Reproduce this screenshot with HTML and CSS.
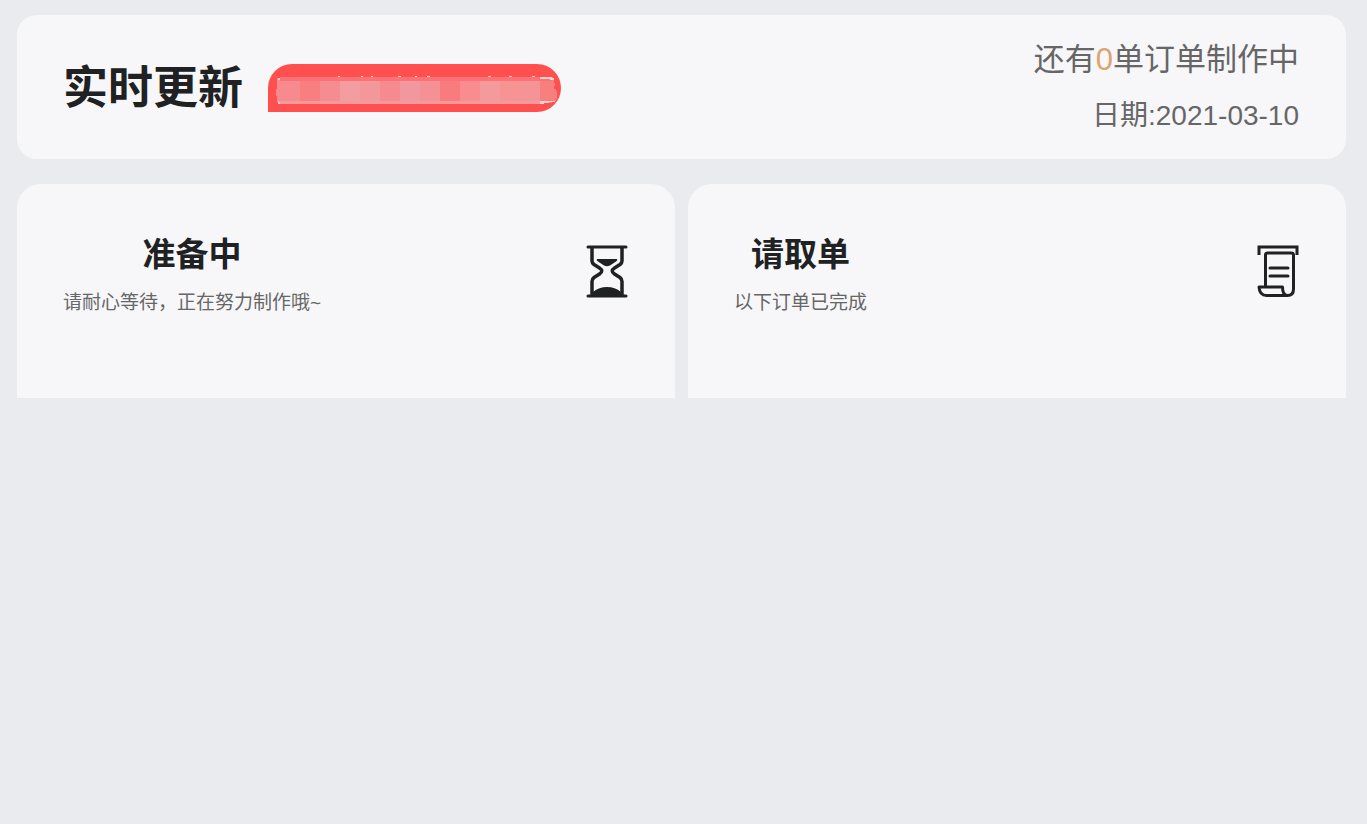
FILE: index.html
```
<!DOCTYPE html>
<html lang="zh-CN">
<head>
    <meta charset="UTF-8">
    <meta name="viewport" content="width=device-width, initial-scale=1.0">
    <title>实时更新</title>
    <link rel="stylesheet" href="styles.css">
</head>
<body>
    <header class="top-bar">
        <h1>实时更新</h1>
        <div class="notice">
            <svg width="293" height="48" viewBox="0 0 293 48" aria-hidden="true" shape-rendering="crispEdges">
                <path fill="#f78a8e" d="M9 14h3v26h-2v-2h-1v-6h-1v-7h1z"/>
                <!-- bloques -->
                <rect x="12" y="13" width="20" height="27" fill="#f78a8e"/>
                <rect x="32" y="13" width="20" height="27" fill="#f87e80"/>
                <rect x="52" y="13" width="20" height="27" fill="#f58c92"/>
                <rect x="72" y="13" width="20" height="27" fill="#f29ea0"/>
                <rect x="92" y="13" width="20" height="27" fill="#f4979b"/>
                <rect x="112" y="13" width="20" height="27" fill="#f58a8f"/>
                <rect x="132" y="13" width="20" height="27" fill="#f2979e"/>
                <rect x="152" y="13" width="20" height="27" fill="#f49195"/>
                <rect x="172" y="13" width="20" height="27" fill="#f87c7e"/>
                <rect x="192" y="13" width="20" height="27" fill="#f88c8f"/>
                <rect x="212" y="13" width="20" height="27" fill="#f49a9c"/>
                <rect x="232" y="13" width="20" height="27" fill="#f69393"/>
                <rect x="252" y="13" width="20" height="27" fill="#f49496"/>
                <path fill="#f77f80" d="M272 13h13v2h1v4h1v3h-1v3h2v2h1v8h-1v2h-4v2h-12z"/>
                <rect x="12" y="13" width="272" height="4" fill="#fb7276"/>
                <rect x="10" y="37" width="262" height="3" fill="#f6999c"/>
                <path fill="#fbd0d2" d="M272 37h15v1h-6v1h-5v1h-4zM272 13h12v1h2v2h-4v-1h-10zM10 14h2v2h-2zM10 37h1v1h1v2h-2zM70 12h2v1h-2zM93 12h2v1h-2zM103 12h2v1h-2zM130 12h3v1h-3zM147 12h2v1h-2zM159 12h3v1h-3zM220 12h3v1h-3zM241 12h3v1h-3zM264 12h3v1h-3z"/>
            </svg>
        </div>
        <div class="summary">
            <p class="remain">还有<span>0</span>单订单制作中</p>
            <p class="date">日期:2021-03-10</p>
        </div>
    </header>

    <main class="boards">
        <section class="board">
            <div class="board-title">
                <h2>准备中</h2>
                <p>请耐心等待，正在努力制作哦~</p>
            </div>
            <svg class="icon" viewBox="0 0 42 54" aria-hidden="true">
                <g fill="none" stroke="#202122" stroke-width="3.5" stroke-linecap="round" stroke-linejoin="round">
                    <path stroke-width="3" d="M2 2h38M2 51h38"/>
                    <path d="M6 3v13q0 2 2 3.500l5.500 3.500q4.500 3 0 6L8 32.500q-2 1.500-2 4V50"/>
                    <path d="M36 3v13q0 2-2 3.500L28.500 23q-4.500 3 0 6l5.500 3.500q2 1.500 2 4V50"/>
                </g>
                <path fill="#202122" d="M11 14h20q1 1-1 2.500l-6 4q-3 1.500-6 0l-6-4q-2-1.500-1-2.500zM7 50v-3q6-5 14-5t14 5v3z"/>
            </svg>
        </section>
        <section class="board">
            <div class="board-title">
                <h2>请取单</h2>
                <p>以下订单已完成</p>
            </div>
            <svg class="icon" viewBox="0 0 42 54" aria-hidden="true">
                <g fill="none" stroke="#202122" stroke-width="3" stroke-linecap="round" stroke-linejoin="round">
                    <path stroke-linecap="butt" stroke-linejoin="miter" d="M2 10V2h38v8"/>
                    <path d="M8 42V10q0-2 2-2h24q2 0 2 2v34q0 6.500-6 6.500H9q-7 0-7.500-8.500H25q0 8.500 5 8.500" transform="translate(.5 0)"/>
                    <path d="M13 23h18M13 31h18"/>
                </g>
            </svg>
        </section>
    </main>
</body>
</html>
```
FILE: styles.css
```
* {
    box-sizing: border-box;
}

body {
    margin: 0;
    padding: 15px 21px 0 17px;
    min-height: 100vh;
    font-family: "Liberation Sans", "Noto Sans CJK SC", sans-serif;
    background: #eaebef;
    color: #202122;
}

h1,
h2,
p {
    margin: 0;
}

.top-bar {
    display: flex;
    align-items: center;
    padding: 17px 47px 15px 46px;
    margin-bottom: 25px;
    background: #f7f7f9;
    border-radius: 20px;
}

.top-bar h1 {
    padding-top: 2px;
    font-size: 45px;
    line-height: 56px;
}

.notice {
    margin-left: 25px;
    height: 48px;
    background: #ff4f4f;
    border-radius: 24px 24px 24px 0;
    overflow: hidden;
}

.notice svg {
    display: block;
}

.summary {
    margin-left: auto;
    text-align: right;
    line-height: 56px;
    color: #666;
}

.remain {
    font-size: 31px;
}

.remain span {
    color: #dda46f;
}

.date {
    font-size: 28px;
}

.boards {
    display: grid;
    grid-template-columns: 1fr 1fr;
    gap: 13px;
}

.board {
    display: flex;
    justify-content: space-between;
    align-items: center;
    padding: 46px 47px 84px 46px;
    background: #f7f7f9;
    border-radius: 24px 24px 0 0;
}

.board-title {
    text-align: center;
}

.board-title h2 {
    margin-bottom: 12px;
    font-size: 33px;
    line-height: 50px;
}

.board-title p {
    font-size: 19px;
    line-height: 22px;
    color: #666;
}

.icon {
    width: 42px;
    height: 54px;
}
```
